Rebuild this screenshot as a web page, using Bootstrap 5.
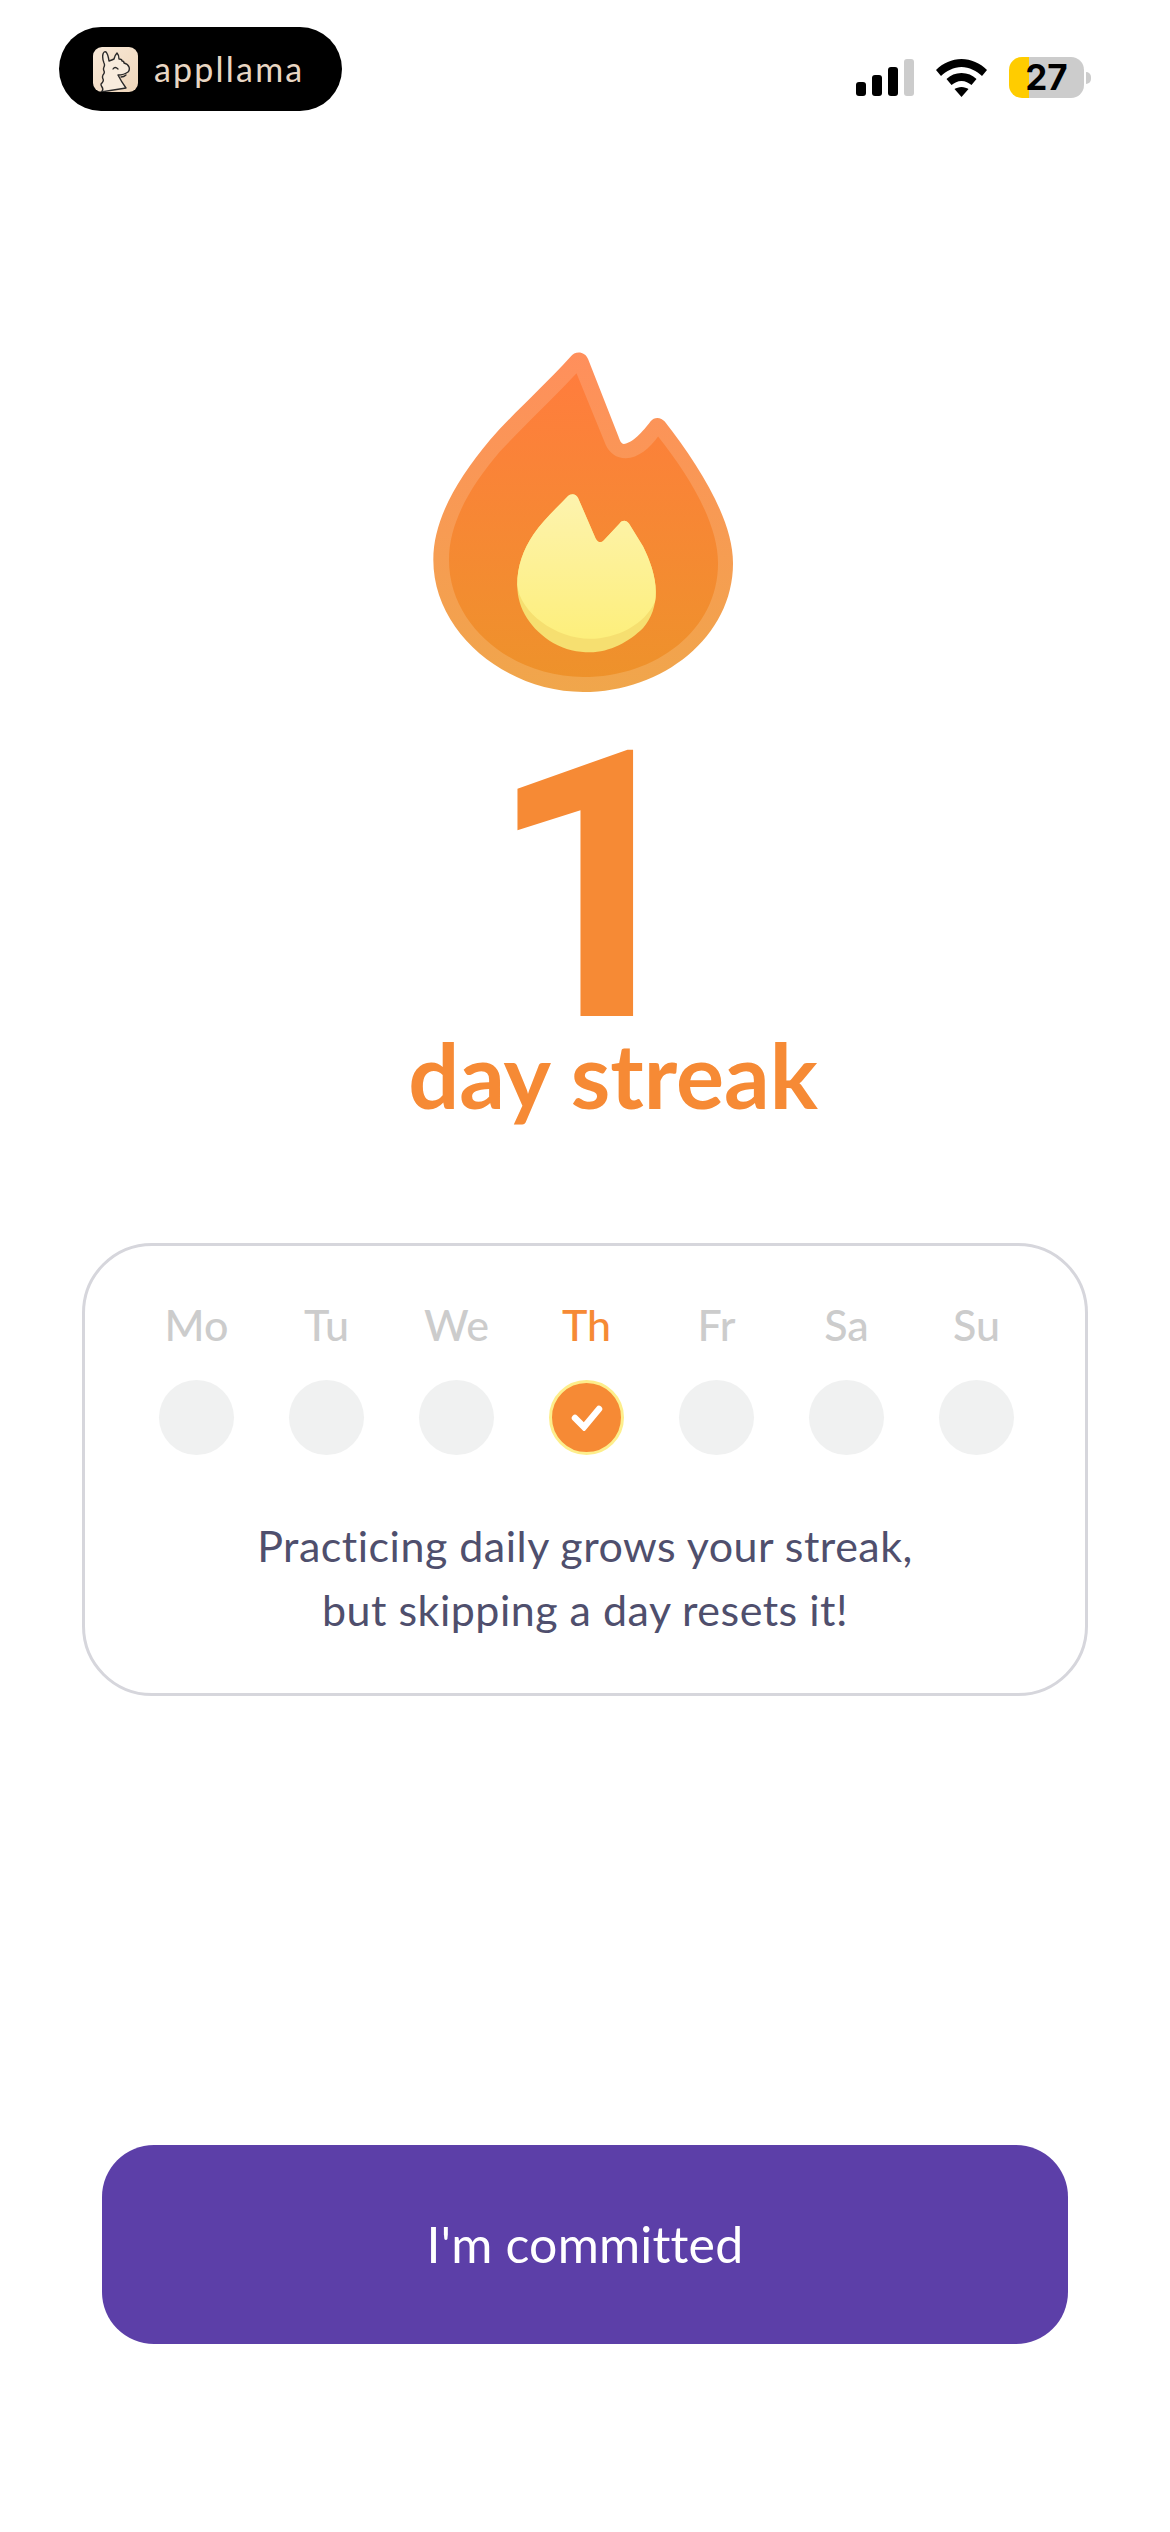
<!DOCTYPE html>
<html lang="en">

<head>
    <meta charset="UTF-8">
    <meta name="viewport" content="width=device-width, initial-scale=1.0">
    <title>Streak</title>
    <link href="https://cdn.jsdelivr.net/npm/bootstrap@5.3.0/dist/css/bootstrap.min.css" rel="stylesheet">
    <style>
        body {
            background: #fff;
            font-family: "Lato", "Liberation Sans", sans-serif;
        }

        .phone-screen {
            width: 1170px;
            height: 2532px;
            overflow: hidden;
        }

        .status-row {
            height: 111px;
            padding: 27px 79px 0 59px;
        }

        .brand-pill {
            width: 283px;
            height: 84px;
            padding-left: 34px;
            gap: 16px;
            background: #000;
            border-radius: 42px;
        }

        .brand-word {
            color: #e8d6c3;
            font-size: 34px;
            font-weight: 400;
            letter-spacing: 2.2px;
            line-height: 1;
        }

        .status-icons {
            padding-top: 30px;
            gap: 22px;
        }

        .battery-body {
            width: 75px;
            height: 41px;
            border-radius: 13px;
            background: linear-gradient(90deg, #fc0 27%, #ccc 27%);
            color: #000;
            font-family: "Inter", sans-serif;
            font-size: 35px;
            font-weight: 700;
            line-height: 41px;
            text-align: center;
        }

        .battery-nub {
            width: 5px;
            height: 12px;
            margin-left: 2px;
            background: #ccc;
            border-radius: 0 6px 6px 0;
        }

        .flame-wrap {
            padding: 239px 0 0 433px;
        }

        .big-num {
            margin-top: 65px;
            padding-left: 18px;
            color: #f68a35;
            font-family: "Roboto", sans-serif;
            font-size: 374px;
            font-weight: 700;
            line-height: 260px;
        }

        .streak-word {
            margin-top: 6px;
            padding-left: 56px;
            color: #f68a35;
            font-size: 90px;
            font-weight: 700;
            line-height: 100px;
        }

        .week-box {
            width: 1006px;
            height: 453px;
            margin: 119px 0 0 82px;
            padding: 54px 0 0 74px;
            border: 3px solid #d6d6dc;
            border-radius: 70px;
        }

        .week-cols {
            gap: 55px;
        }

        .day-col {
            width: 75px;
        }

        .day-name {
            color: #ccc;
            font-size: 43px;
            font-weight: 500;
            line-height: 50px;
            white-space: nowrap;
        }

        .day-on .day-name {
            color: #f68a35;
        }

        .day-dot {
            width: 75px;
            height: 75px;
            margin-top: 30px;
            background: #f0f1f1;
        }

        .day-on .day-dot {
            background: #f68a35;
            border: 3px solid #fdee8c;
        }

        .week-note {
            margin: 59px 0 0 -74px;
            color: #4f4f6d;
            font-size: 43px;
            line-height: 64px;
            letter-spacing: .5px;
        }

        .commit-btn {
            width: 966px;
            height: 199px;
            margin: 449px 0 0 102px;
            background: #5c3fa8;
            border: 0;
            border-radius: 52px;
            color: #fff;
            font-size: 50px;
            letter-spacing: .2px;
        }
    </style>
</head>

<body>
    <div class="phone-screen">
        <div class="status-row d-flex justify-content-between align-items-start">
            <div class="brand-pill d-flex align-items-center">
                <svg width="45" height="45" viewBox="0 0 45 45">
                    <defs>
                        <linearGradient id="logoBg" x1="0" y1="0" x2="1" y2="1">
                            <stop offset="0" stop-color="#f8e9d8" />
                            <stop offset="1" stop-color="#efd6ba" />
                        </linearGradient>
                    </defs>
                    <rect width="45" height="45" rx="9" fill="url(#logoBg)" />
                    <path d="M8 45q3-2 1-5t0-4q2-2 1-4t0-4q2-2 1-4t0-4q1-2 0-4-2-5-1-9 1-3 3-2 2 2 3 9 3-1 5-2 1-4 3-6 2 2 2 6 3 0 3 2 2 0 2 2 4 1 5 4t-1 5q-4 3-10 3 3 6 8 13z" fill="#f8ecdd" stroke="#2b2a2a" stroke-width="1.400" stroke-linejoin="round" />
                    <path d="M20 22q2-3 5 0M28 30q3 0 5-2" fill="none" stroke="#2b2a2a" stroke-width="1.300" stroke-linecap="round" />
                </svg>
                <span class="brand-word">appllama</span>
            </div>
            <div class="status-icons d-flex align-items-center">
                <svg width="58" height="38" viewBox="0 0 58 38">
                    <rect x="0" y="23" width="10" height="14" rx="3" />
                    <rect x="16" y="16" width="10" height="21" rx="3" />
                    <rect x="32" y="8" width="10" height="29" rx="3" />
                    <rect x="48" y="0" width="10" height="37" rx="3" fill="#ccc" />
                </svg>
                <svg width="51" height="38" viewBox="0 0 51 38">
                    <path d="M25.500 0C35 0 44 4 51 11l-5 6c-5-5-13-9-20.500-9S10 12 5 17l-5-6C7 4 16 0 25.500 0z" />
                    <path d="M25.500 14c6 0 11 2 15 6l-5 6c-3-2-6-4-10-4s-7 2-10 4l-5-6c4-4 9-6 15-6z" />
                    <path d="M25.500 28c3 0 5 1 7 2l-7 8-7-8c2-1 4-2 7-2z" />
                </svg>
                <div class="d-flex align-items-center">
                    <div class="battery-body">27</div>
                    <div class="battery-nub"></div>
                </div>
            </div>
        </div>

        <div class="flame-wrap d-flex">
            <svg width="302" height="343" viewBox="100 90 905 1030">
                <defs>
                    <linearGradient id="flameOuter" x1="0" y1="0" x2="0" y2="1">
                        <stop offset="0" stop-color="#ff8f5c" />
                        <stop offset="1" stop-color="#f0a64b" />
                    </linearGradient>
                    <linearGradient id="flameInner" x1="0" y1="0" x2="0" y2="1">
                        <stop offset="0" stop-color="#ff7d3d" />
                        <stop offset="1" stop-color="#ee922b" />
                    </linearGradient>
                    <linearGradient id="coreFill" x1="0" y1="0" x2="0" y2="1">
                        <stop offset="0" stop-color="#fdf3ae" />
                        <stop offset="1" stop-color="#fdef7c" />
                    </linearGradient>
                </defs>
                <path d="M512 110C430 200 340 280 270 360 170 480 100 600 100 720 100 940 320 1117 550 1117 790 1117 1000 950 1000 730 1000 600 900 440 795 305c-10-12-30-17-43 0-22 30-57 67-80 67-8 0-12-10-16-22L565 118c-10-26-40-26-53-8z" fill="url(#flameOuter)" />
                <path d="M530 160C440 255 370 320 300 395 210 500 147 610 147 720 147 920 340 1072 550 1072 770 1072 955 930 955 730 955 610 870 470 775 350c-25 35-60 65-97 65-28 0-50-17-60-40z" fill="url(#flameInner)" />
                <path d="M503 530C470 565 430 600 400 645 370 690 352 740 352 795c0 75 43 135 108 175 35 20 75 28 110 28 60 0 120-33 160-73 25-30 38-65 38-110 0-45-18-95-38-135l-42-68c-8-12-20-12-28-2l-45 48c-10 12-20 12-28-3L535 535c-7-15-22-15-32-5z" fill="#f6df70" />
                <path d="M503 530C470 565 430 600 400 645 370 690 352 740 352 795c8 85 118 162 218 162 80 0 165-42 196-112 2-10 2-20 2-30 0-45-18-95-38-135l-42-68c-8-12-20-12-28-2l-45 48c-10 12-20 12-28-3L535 535c-7-15-22-15-32-5z" fill="url(#coreFill)" />
            </svg>
        </div>

        <div class="big-num text-center">1</div>
        <div class="streak-word text-center">day streak</div>

        <div class="week-box">
            <div class="week-cols d-flex">
                <div class="day-col d-flex flex-column align-items-center">
                    <div class="day-name">Mo</div>
                    <div class="day-dot rounded-circle"></div>
                </div>
                <div class="day-col d-flex flex-column align-items-center">
                    <div class="day-name">Tu</div>
                    <div class="day-dot rounded-circle"></div>
                </div>
                <div class="day-col d-flex flex-column align-items-center">
                    <div class="day-name">We</div>
                    <div class="day-dot rounded-circle"></div>
                </div>
                <div class="day-col day-on d-flex flex-column align-items-center">
                    <div class="day-name">Th</div>
                    <div class="day-dot rounded-circle d-flex align-items-center justify-content-center">
                        <svg width="32" height="26" viewBox="0 0 32 26">
                            <path d="M4 13l9 9L28 4" fill="none" stroke="#fff" stroke-width="6.500" stroke-linecap="round" />
                        </svg>
                    </div>
                </div>
                <div class="day-col d-flex flex-column align-items-center">
                    <div class="day-name">Fr</div>
                    <div class="day-dot rounded-circle"></div>
                </div>
                <div class="day-col d-flex flex-column align-items-center">
                    <div class="day-name">Sa</div>
                    <div class="day-dot rounded-circle"></div>
                </div>
                <div class="day-col d-flex flex-column align-items-center">
                    <div class="day-name">Su</div>
                    <div class="day-dot rounded-circle"></div>
                </div>
            </div>
            <p class="week-note text-center mb-0">Practicing daily grows your streak,<br>but skipping a day resets it!</p>
        </div>

        <button class="commit-btn btn d-block" type="button">I'm committed</button>
    </div>

    <script src="https://cdn.jsdelivr.net/npm/bootstrap@5.3.0/dist/js/bootstrap.bundle.min.js"></script>
</body>

</html>
